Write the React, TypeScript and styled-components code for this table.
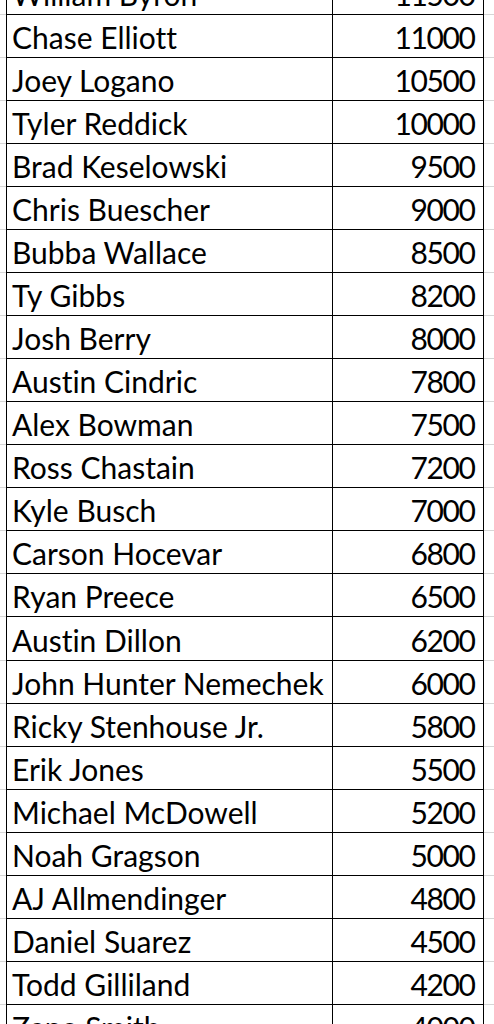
import React from 'react';
import styled, { createGlobalStyle } from 'styled-components';

const GlobalStyle = createGlobalStyle`
  html, body {
    margin: 0;
    padding: 0;
    background: #ffffff;
  }
`;

const Viewport = styled.div`
  width: 494px;
  height: 1024px;
  overflow: hidden;
  background: #ffffff;
`;

const Sheet = styled.div`
  margin-top: -28px;
  font-family: Lato, "Liberation Sans", sans-serif;
  font-variant-ligatures: none;
  color: #000;
`;

const Row = styled.div`
  display: grid;
  grid-template-columns: 6px 326px 152px 10px;
  height: 43.04px;
`;

const Gutter = styled.div`
  box-sizing: border-box;
  border-bottom: 1px solid #d6d6d6;
`;

const Cell = styled.div<{ $align: 'left' | 'right' }>`
  box-sizing: border-box;
  display: flex;
  align-items: flex-end;
  justify-content: ${p => (p.$align === 'right' ? 'flex-end' : 'flex-start')};
  padding: 0 ${p => (p.$align === 'right' ? '8.4px' : '0')} 5px ${p => (p.$align === 'left' ? '5px' : '0')};
  border-left: 1px solid #000;
  border-bottom: 1px solid #000;
  ${p => (p.$align === 'right' ? 'border-right: 1px solid #000; letter-spacing: -1.4px;' : '')}
  font-size: 30px;
  line-height: 30px;
  white-space: nowrap;
  overflow: hidden;
`;

const drivers: [string, number][] = [
  ['William Byron', 11500],
  ['Chase Elliott', 11000],
  ['Joey Logano', 10500],
  ['Tyler Reddick', 10000],
  ['Brad Keselowski', 9500],
  ['Chris Buescher', 9000],
  ['Bubba Wallace', 8500],
  ['Ty Gibbs', 8200],
  ['Josh Berry', 8000],
  ['Austin Cindric', 7800],
  ['Alex Bowman', 7500],
  ['Ross Chastain', 7200],
  ['Kyle Busch', 7000],
  ['Carson Hocevar', 6800],
  ['Ryan Preece', 6500],
  ['Austin Dillon', 6200],
  ['John Hunter Nemechek', 6000],
  ['Ricky Stenhouse Jr.', 5800],
  ['Erik Jones', 5500],
  ['Michael McDowell', 5200],
  ['Noah Gragson', 5000],
  ['AJ Allmendinger', 4800],
  ['Daniel Suarez', 4500],
  ['Todd Gilliland', 4200],
  ['Zane Smith', 4000],
];

export default function App() {
  return (
    <Viewport>
      <GlobalStyle />
      <Sheet>
        {drivers.map(([name, value]) => (
          <Row key={name}>
            <Gutter />
            <Cell $align="left">{name}</Cell>
            <Cell $align="right">{value}</Cell>
            <Gutter />
          </Row>
        ))}
      </Sheet>
    </Viewport>
  );
}
